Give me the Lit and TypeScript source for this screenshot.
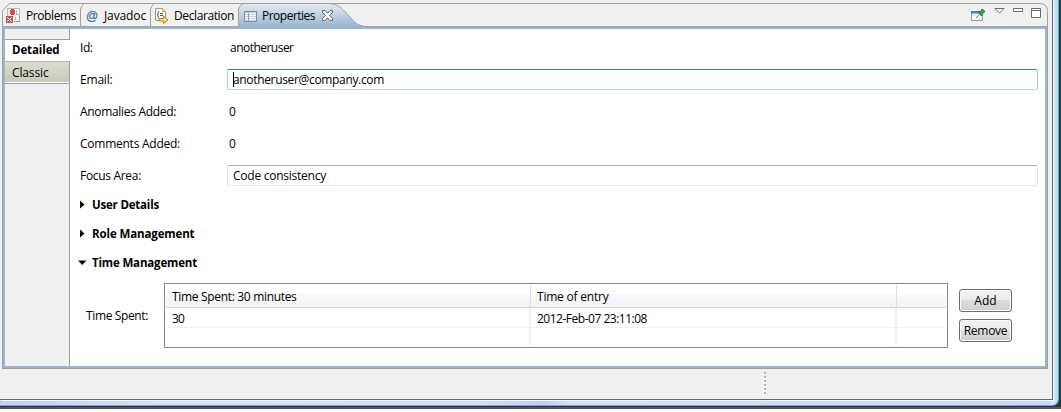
import { LitElement, html, svg, css } from "lit";
import { customElement } from "lit/decorators.js";

const FAMILY = '"Open Sans", "Noto Sans", sans-serif';
const ctx = document.createElement("canvas").getContext("2d")!;

/** Text run tracked so that it fills the given advance width. */
const run = (text: string, width: number, bold = false) => {
  const size = bold ? 11.5 : 12;
  ctx.font = `${bold ? 700 : 400} ${size}px ${FAMILY}`;
  const gap = (width - ctx.measureText(text).width) / text.length;
  return html`<span class=${bold ? "run bold" : "run"} style="letter-spacing:${gap.toFixed(3)}px">${text}</span>`;
};

const px = (x: number, y: number, w: number, h: number, fill: string) =>
  svg`<rect x=${x} y=${y} width=${w} height=${h} fill=${fill} />`;

const problemsIcon = html`<svg class="ico" width="16" height="16" viewBox="0 0 16 16" shape-rendering="crispEdges">
  ${px(1, 1, 8, 8, "#f6e6e7")}${px(1, 0, 8, 1, "#b9b0b8")}${px(1, 1, 1, 7, "#c9b3b8")}
  ${px(4, 2, 5, 4, "#e0565b")}${px(5, 1, 3, 6, "#dc4449")}
  ${px(9, 1, 5, 13, "#f3f7fc")}${px(9, 0, 5, 1, "#b5bfcd")}${px(13, 1, 1, 5, "#b5c6dc")}
  ${px(10, 2, 1, 5, "#a9bdd8")}${px(11, 6, 2, 1, "#9eb6d4")}${px(13, 7, 1, 6, "#8aa7cc")}
  ${px(8, 13, 6, 1, "#7b9cc4")}${px(9, 9, 1, 3, "#9eb6d4")}
  ${px(0, 8, 7, 7, "#c94b50")}${px(1, 9, 5, 5, "#dd5a5f")}
  ${px(1, 9, 1, 1, "#f3c4c6")}${px(2, 10, 1, 1, "#fff")}${px(3, 11, 1, 1, "#fff")}${px(4, 12, 1, 1, "#fff")}${px(5, 13, 1, 1, "#f3c4c6")}
  ${px(5, 9, 1, 1, "#f3c4c6")}${px(4, 10, 1, 1, "#fff")}${px(2, 12, 1, 1, "#fff")}${px(1, 13, 1, 1, "#f3c4c6")}
</svg>`;

const javadocIcon = html`<span class="at">@</span>`;

const declarationIcon = html`<svg class="ico" width="16" height="16" viewBox="0 0 16 16">
  <path d="M1.5 .5h7l3 3v9h-10z" fill="#fffdf2" stroke="#b39a5c" />
  <path d="M8.500.5v3h3" fill="#ead9a0" stroke="#c6ad6c" />
  <path d="M5.500 3.500q-1.500 0-1.500 1.500v1q0 1-1 1 1 0 1 1v1q0 1.500 1.500 1.500M6 5.500h3M6 7.500h3" fill="none" stroke="#2f6899" />
  <path d="M5.500 10.500h4v-2.500l4.500 4-4.500 3.500v-2.500h-4z" fill="#ffe08a" stroke="#b8862b" />
</svg>`;

const propertiesIcon = html`<svg class="ico" width="13" height="11" viewBox="0 0 13 11" shape-rendering="crispEdges">
  ${px(0, 0, 13, 11, "#7d8ba3")}${px(1, 1, 11, 1, "#b9c7dc")}${px(1, 2, 11, 8, "#fff")}
  ${[3, 5, 7, 9].map((y) => px(1, y, 11, 1, "#c3cfdf"))}${px(4, 2, 1, 8, "#8f9db5")}
  ${px(8, 2, 1, 8, "#dbe3ee")}
</svg>`;

const closeIcon = html`<svg class="ico" width="11" height="11" viewBox="0 0 11 11">
  <path d="M.5.5h2.500l2.500 2.700L8 .5h2.500v2L7.700 5.500l2.800 3v2H8L5.500 7.800 3 10.500H.5v-2l2.800-3L.5 2.500z" fill="#fff" stroke="#64686e" />
</svg>`;

const shape = html`<svg class="shape" width="1046" height="26" viewBox="2 3 1046 26">
  <defs>
    <linearGradient id="active" x1="0" y1="0" x2="0" y2="1">
      <stop offset="0" stop-color="#e4ebf3" /><stop offset="1" stop-color="#99b4d1" />
    </linearGradient>
  </defs>
  <path d="M2.500 29V10.500L9.500 3.500H1039.500Q1047.500 3.500 1047.500 11.500V29" fill="#f0f0f0" stroke="#a0a0a0" />
  <path d="M80.500 26V10Q80.500 7 84 3.500M150.500 26V10Q150.500 7 154 3.500" fill="none" stroke="#a0a0a0" />
  <path d="M3 26.500H1047" stroke="#a0a0a0" />
  <path d="M3 27H1047V29H3z" fill="#99b4d1" />
  <path d="M238.500 27V10Q239 5 244 3.500H329C340 4 344 11 349 16S356 26 366 26.500V27z" fill="url(#active)" />
  <path d="M238.500 27V10Q239 5 244 3.500H329C340 4 344 11 349 16S356 26 366 26.500" fill="none" stroke="#a0a0a0" />
</svg>`;

const pinIcon = html`<svg class="pin" width="15" height="14" viewBox="0 0 15 14">
  <path d="M.5 3.500h11v9H.5z" fill="#fff9e6" stroke="#8c9cae" />
  <path d="M0 3h9v2.500H0z" fill="#3f83c9" /><path d="M1 6h5v2H1z" fill="#dcebf8" />
  <path d="M5 10l3-3" stroke="#777" />
  <path d="M7 4.500l2-.5 2-3 3 2.500-2.500 2-1 2.500z" fill="#4ba04c" stroke="#2c6b34" />
</svg>`;

@customElement("app-root")
export class AppRoot extends LitElement {
  static styles = css`
    :host { display: block; height: 412px; overflow: hidden; background: #fff; color: #000;
      font: 12px/16px "Open Sans", "Noto Sans", sans-serif; }
    * { box-sizing: border-box; }
    .desktop { height: 409px; background: linear-gradient(#333 0 407px, #555 407px); }
    .frame { width: 1059px; height: 406px; padding: 0 5px 5px 0; border: solid #2cc5ee; border-width: 0 1px 1px 0;
      border-radius: 0 0 7px 0; background: linear-gradient(90deg, #bcd3ee 0, #cfe2fa 160px, #cde1fb 480px, #b9d2ee 545px, #cfe3fc 570px, #c3daf5 1050px, #dbe9fb 1053px, #bcd6f3); }
    .client { height: 400px; padding: 3px 4px 0 2px; background: #f0f0f0; border: solid #626977; border-width: 0 1px 1px 0; box-shadow: 1px 1px #eef5fd; }
    .folder { width: 1046px; height: 366px; display: flex; flex-direction: column; }
    .tabs { position: relative; height: 26px; display: flex; align-items: center; flex: none; }
    .shape { position: absolute; left: 0; top: 0; }
    .tab { position: relative; display: flex; align-items: center; height: 26px; gap: 4px; }
    .t1 { width: 78px; padding-left: 4px; }
    .t2 { width: 70px; padding-left: 6px; }
    .t3 { width: 88px; padding-left: 4px; }
    .t4 { width: 130px; padding-left: 6px; gap: 5px; }
    .t4 .run + .ico { margin: -2px 0 0 2px; }
    .ico { display: block; flex: none; }
    .at { width: 14px; color: #2c6ca8; font: 12px/16px "Liberation Sans", sans-serif; -webkit-text-stroke: .2px #2c6ca8; }
    .tools { position: relative; margin-left: auto; display: flex; align-items: flex-start; height: 20px; padding-right: 2px; }
    .pin { margin-top: 2px; }
    .run { display: inline-block; white-space: pre; }
    .bold { font-weight: 700; font-size: 11.5px; }
    .edge { flex: 1; display: flex; border: solid #a0a0a0; border-width: 0 1px 1px; }
    .body { flex: 1; display: flex; background: #fff; border: solid #99b4d1; border-width: 0 2px 2px; }
    .side { width: 65px; background: #f0f0f0; display: flex; flex-direction: column; }
    .side > div { border-right: 1px solid #a0a0a0; padding-left: 7px; }
    .side .gap { height: 11px; border-bottom: 1px solid #a0a0a0; }
    .side .on { height: 21px; line-height: 20px; background: #fff; border-right: 0; }
    .side .off { height: 23px; line-height: 21px; background: linear-gradient(#dcddd0, #c7c8ba); border-top: 1px solid #b4b4ac; border-bottom: 1px solid #a0a0a0; box-shadow: inset 0 -1px #fff; }
    .side .rest { flex: 1; }
    .page { flex: 1; display: flex; flex-direction: column; padding: 3px 7px 0 10px; }
    .form { display: grid; grid-template-columns: 147px 1fr; grid-template-rows: repeat(4, 32px) 30px; line-height: 32px; }
    .plain { padding-left: 3px; }
    .num { padding-left: 2px; }
    .field { height: 21px; margin-top: 5px; padding-left: 5px; line-height: 20px; border: 1px solid; border-color: #abadb3 #e2e3ea #e3e9ef; border-radius: 2px; display: flex; }
    .focus { border-color: #3d7bad #a4c9e3 #b7d9ed; position: relative; }
    .focus::before { content: ""; position: absolute; left: 5px; top: 2px; width: 1px; height: 15px; background: #000; }
    .section { height: 29px; display: flex; align-items: center; gap: 5px; }
    .tri { width: 7px; flex: none; }
    .tri svg { display: block; margin-left: -2px; }
    .time { display: flex; padding: 6px 0 0 6px; }
    .time .lab { width: 78px; padding-top: 25px; }
    .table { width: 784px; height: 65px; border: 1px solid #828790; padding: 1px; }
    .row { display: grid; grid-template-columns: 365px 366px 1fr; }
    .head { height: 23px; border-bottom: 1px solid #d5d5d5; background: linear-gradient(#fff 0 9px, #f7f8fa 9px, #f1f2f4); line-height: 24px; }
    .head div { border-right: 1px solid #dedfe1; padding-left: 6px; }
    .cells { height: 20px; line-height: 21px; border-bottom: 1px solid #f0f0f0; }
    .cells div { border-right: 2px solid #f0f0f0; padding-left: 6px; }
    .row div:last-child { border-right: 0; }
    .last { height: 18px; border: 0; }
    .btns { display: flex; flex-direction: column; gap: 7px; padding: 6px 0 0 11px; }
    .btn { width: 53px; height: 23px; padding: 0; border: 1px solid #707070; border-radius: 3px; display: flex; justify-content: center; align-items: center;
      box-shadow: inset 0 0 0 1px #fbfbfb; background: linear-gradient(#f2f2f2, #ebebeb 50%, #dddddd 50%, #cfcfcf); font: inherit; color: #000; }
    .status { display: flex; flex-direction: column; gap: 2px; padding: 3px 0 0 762px; }
    .status i { width: 2px; height: 2px; background: #b2b2b2; box-shadow: -1px 1px #fff; }
  `;

  private section(title: string, width: number, open = false) {
    return html`<div class="section">
      <span class="tri"><svg width="9" height="9" viewBox="0 0 9 9"><path d=${open ? "M0 2.500h8.500L4.250 7z" : "M2 .5v8l4.500-4z"} /></svg></span>
      ${run(title, width, true)}
    </div>`;
  }

  render() {
    return html`<div class="desktop"><div class="frame"><div class="client">
      <div class="folder">
        <div class="tabs">
          ${shape}
          <div class="tab t1">${problemsIcon}${run("Problems", 50)}</div>
          <div class="tab t2">${javadocIcon}${run("Javadoc", 42)}</div>
          <div class="tab t3">${declarationIcon}${run("Declaration", 60)}</div>
          <div class="tab t4">${propertiesIcon}${run("Properties", 53)}${closeIcon}</div>
          <div class="tools">
            ${pinIcon}
            <svg width="60" height="14" viewBox="0 0 60 14">
              <path d="M9 2.500h9l-4.500 4.500z" fill="#fff" stroke="#6b6b6b" />
              <path d="M27.500 2.500h9v3h-9z" fill="#fff" stroke="#6b6b6b" />
              <path d="M45.500 2.500h9v9h-9zM45.500 4.500h9" fill="#fff" stroke="#6b6b6b" />
            </svg>
          </div>
        </div>
        <div class="edge"><div class="body">
          <div class="side">
            <div class="gap"></div>
            <div class="on">${run("Detailed", 47.5, true)}</div>
            <div class="off">${run("Classic", 36.5)}</div>
            <div class="rest"></div>
          </div>
          <div class="page">
            <div class="form">
              <div>${run("Id:", 12.5)}</div><div class="plain">${run("anotheruser", 63.5)}</div>
              <div>${run("Email:", 32.5)}</div><div class="field focus">${run("anotheruser@company.com", 151)}</div>
              <div>${run("Anomalies Added:", 96)}</div><div class="num">${run("0", 7)}</div>
              <div>${run("Comments Added:", 100)}</div><div class="num">${run("0", 7)}</div>
              <div>${run("Focus Area:", 61)}</div><div class="field">${run("Code consistency", 93)}</div>
            </div>
            ${this.section("User Details", 67)}
            ${this.section("Role Management", 102.5)}
            ${this.section("Time Management", 105, true)}
            <div class="time">
              <div class="lab">${run("Time Spent:", 62)}</div>
              <div class="table">
                <div class="row head"><div>${run("Time Spent: 30 minutes", 124.5)}</div><div>${run("Time of entry", 71.5)}</div><div></div></div>
                <div class="row cells"><div>${run("30", 12)}</div><div>${run("2012-Feb-07 23:11:08", 110)}</div><div></div></div>
                <div class="row cells last"><div></div><div></div><div></div></div>
              </div>
              <div class="btns">
                <button class="btn">${run("Add", 22.5)}</button>
                <button class="btn">${run("Remove", 43.5)}</button>
              </div>
            </div>
          </div>
        </div></div>
      </div>
      <div class="status"><i></i><i></i><i></i><i></i><i></i><i></i></div>
    </div></div></div>`;
  }
}
